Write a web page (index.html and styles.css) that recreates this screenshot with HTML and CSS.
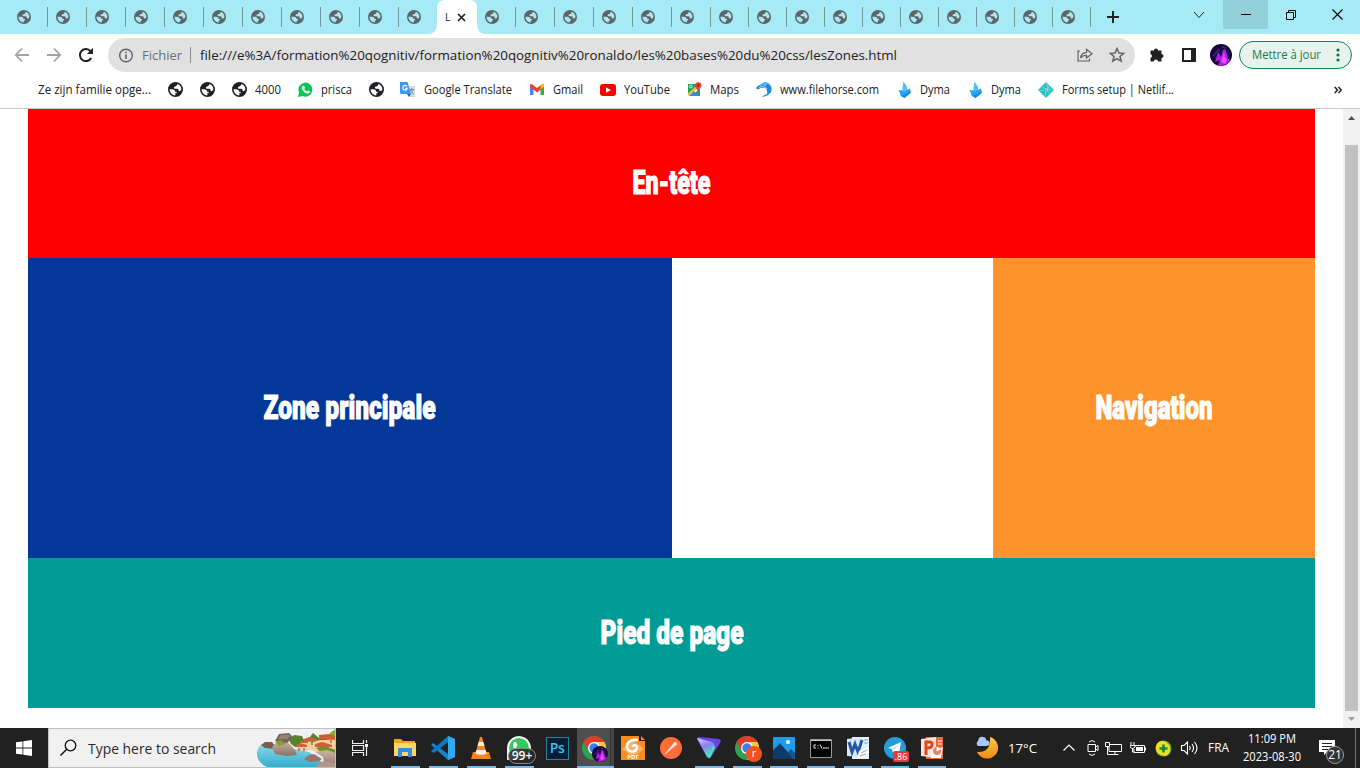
FILE: index.html
```html
<!DOCTYPE html>
<html lang="fr">
<head>
<meta charset="utf-8">
<title>Les zones</title>
<link rel="stylesheet" href="styles.css">
</head>
<body>
<svg class="defs" width="0" height="0">
  <symbol id="globe" viewBox="0 0 14 14"><circle cx="7" cy="7" r="7" fill="currentColor"/><path class="land" d="M1.500 6.700H4.200Q6.700 7 6.700 9H8V10.500H6.800V12.500C3.800 12.300 1.500 9.800 1.500 6.700zM9 1.800C11.300 2.700 12.600 4.800 12.500 7.300L11.300 8.400H9.800V7.100L8.600 6.300H6.300Q5 5.800 5.700 4.500L7.600 3.900z"/></symbol>
  <symbol id="chrome" viewBox="0 0 26 26"><circle cx="13" cy="13" r="12" fill="#2fa14f"/><path d="M2.600 7A12 12 0 0 1 23.400 7H13a6 6 0 0 0-5.200 9z" fill="#e33b2e"/><path d="M23.400 7A12 12 0 0 1 13 25l5.200-9A6 6 0 0 0 18.200 10L13 7z" fill="#fcc934"/><circle cx="13" cy="13" r="6" fill="#fff"/><circle cx="13" cy="13" r="4.700" fill="#3b7ded"/></symbol>
  <symbol id="bird" viewBox="0 0 12 16"><path d="M5 0 8.500 5 8 8 11.500 6.500 12 11 6 16 2 13.500 1.500 11.500 0 8 4 8.500z" fill="#27a5f5"/><path d="M2 13.500 8 12 12 8V11L6 16z" fill="#168be3"/><path d="M5 0 8.500 5 8 8 5 10 4 5z" fill="#55bff8"/></symbol>
  <symbol id="avatar" viewBox="0 0 22 22"><circle cx="11" cy="11" r="11" fill="#18073d"/><path d="M5 18 8 8 11 13 13 6 15 5 17 10 18 15 21 16 17 20 11 22 8 21 10 16z" fill="#b21be8"/><path d="M11 18 14 8 15 13 17 16 15 20z" fill="#ed4bf5"/><path d="M3 12 6 9 9 5M12 3l4 1" stroke="#4a1c98" stroke-width="1.500" fill="none"/></symbol>
</svg>

<div class="tabs">
  <div class="tab"><svg><use href="#globe"/></svg></div><div class="tab"><svg><use href="#globe"/></svg></div><div class="tab"><svg><use href="#globe"/></svg></div><div class="tab"><svg><use href="#globe"/></svg></div><div class="tab"><svg><use href="#globe"/></svg></div><div class="tab"><svg><use href="#globe"/></svg></div><div class="tab"><svg><use href="#globe"/></svg></div><div class="tab"><svg><use href="#globe"/></svg></div><div class="tab"><svg><use href="#globe"/></svg></div><div class="tab"><svg><use href="#globe"/></svg></div><div class="tab last"><svg><use href="#globe"/></svg></div>
  <div class="tab-active"><svg class="tab-title" width="7" height="16"><text x="1" y="12">L</text></svg><svg width="9" height="9" viewBox="0 0 9 9"><path d="M1 1 8 8M8 1 1 8" stroke="#202124" stroke-width="1.700"/></svg></div>
  <div class="tab"><svg><use href="#globe"/></svg></div><div class="tab"><svg><use href="#globe"/></svg></div><div class="tab"><svg><use href="#globe"/></svg></div><div class="tab"><svg><use href="#globe"/></svg></div><div class="tab"><svg><use href="#globe"/></svg></div><div class="tab"><svg><use href="#globe"/></svg></div>
  <div class="tab slim"><svg><use href="#globe"/></svg></div><div class="tab slim"><svg><use href="#globe"/></svg></div><div class="tab slim"><svg><use href="#globe"/></svg></div><div class="tab slim"><svg><use href="#globe"/></svg></div><div class="tab slim"><svg><use href="#globe"/></svg></div><div class="tab slim"><svg><use href="#globe"/></svg></div><div class="tab slim"><svg><use href="#globe"/></svg></div><div class="tab slim"><svg><use href="#globe"/></svg></div><div class="tab slim"><svg><use href="#globe"/></svg></div><div class="tab slim"><svg><use href="#globe"/></svg></div>
  <div class="new-tab"><svg width="12" height="12" viewBox="0 0 12 12"><path d="M6 0V12M0 6H12" stroke="#202124" stroke-width="2"/></svg></div>
  <div class="window-controls">
    <div class="win"><svg width="12" height="8" viewBox="0 0 12 8"><path d="M1 1 6 6.500 11 1" fill="none" stroke="#222"/></svg></div>
    <div class="win hover"><svg width="10" height="1"><path d="M0 .5H10" stroke="#000"/></svg></div>
    <div class="win"><svg width="10" height="10" viewBox="0 0 10 10"><path d="M.5 2.500H7.500V9.500H.5zM2.500 2.500V.5H9.500V7.500H7.500" fill="none" stroke="#000"/></svg></div>
    <div class="win"><svg width="11" height="11" viewBox="0 0 11 11"><path d="M.5.5 10.500 10.500M10.500.5.5 10.500" stroke="#000" stroke-width="1.100"/></svg></div>
  </div>
</div>

<div class="toolbar">
  <div class="nav-buttons">
    <svg width="16" height="16" viewBox="0 0 16 16"><path d="M15 8H2M8 1.500 1.800 8 8 14.500" fill="none" stroke="#a3a3a3" stroke-width="1.800"/></svg>
    <svg width="16" height="16" viewBox="0 0 16 16"><path d="M1 8H14M8 1.500 14.200 8 8 14.500" fill="none" stroke="#a3a3a3" stroke-width="1.800"/></svg>
    <svg width="16" height="16" viewBox="0 0 16 16"><path d="M13.200 11A6 6 0 1 1 12.500 4.200" fill="none" stroke="#202124" stroke-width="2"/><path d="M15 .8V7H8.800z" fill="#202124"/></svg>
  </div>
  <div class="omnibox">
    <svg class="info" width="15" height="15" viewBox="0 0 15 15"><circle cx="7" cy="7.500" r="6.300" fill="none" stroke="#5f6368" stroke-width="1.400"/><path d="M7 6.500V11M7 3.700V5.300" stroke="#5f6368" stroke-width="1.600"/></svg>
    <svg class="label scheme" width="41" height="20"><text y="15" textLength="40" lengthAdjust="spacingAndGlyphs">Fichier</text></svg>
    <i class="divider"></i>
    <svg class="label url" width="698" height="20"><text y="15" textLength="697" lengthAdjust="spacingAndGlyphs">file:///e%3A/formation%20qognitiv/formation%20qognitiv%20ronaldo/les%20bases%20du%20css/lesZones.html</text></svg>
    <svg class="share" width="16" height="14" viewBox="0 0 16 14"><path d="M3 3H1V13H12.500V10.500M3.500 10C4 6.500 6 4.500 9.500 4.300V1.300L15 5.700 9.500 10V7.300C7 7.200 5 8 3.500 10z" fill="none" stroke="#606468" stroke-width="1.200"/></svg>
    <svg class="star" width="16" height="16" viewBox="0 0 16 16"><path d="M8 1.500 9.900 6 14.700 6.300 11 9.500 12.200 14.200 8 11.600 3.800 14.200 5 9.500 1.300 6.300 6.100 6z" fill="none" stroke="#5f6368" stroke-width="1.500"/></svg>
  </div>
  <svg class="puzzle" width="16" height="16" viewBox="0 0 16 16"><path d="M1.500 3.500H5A2 2 0 1 1 9 3.500H12.500V7A2 2 0 1 1 12.500 11V14.500H9A2.100 2.100 0 0 0 4.800 14.500H1.500V11A2.100 2.100 0 0 0 1.500 7z" fill="#202124"/></svg>
  <svg class="panel" width="14" height="14" viewBox="0 0 14 14"><path d="M0 0H14V14H0zM2 2V12H9V2z" fill="#202124" fill-rule="evenodd"/></svg>
  <svg class="profile" width="22" height="22"><use href="#avatar"/></svg>
  <div class="update"><svg class="label" width="70" height="18"><text y="13" textLength="69" lengthAdjust="spacingAndGlyphs">Mettre à jour</text></svg><svg width="4" height="14" viewBox="0 0 4 14"><g fill="#087443"><circle cx="2" cy="2" r="1.600"/><circle cx="2" cy="7" r="1.600"/><circle cx="2" cy="12" r="1.600"/></g></svg></div>
</div>

<div class="bookmarks">
  <div class="mark"><svg class="label" width="114" height="18"><text y="13" textLength="113" lengthAdjust="spacingAndGlyphs">Ze zijn familie opge...</text></svg></div>
  <div class="mark"><svg class="world"><use href="#globe"/></svg></div>
  <div class="mark"><svg class="world"><use href="#globe"/></svg></div>
  <div class="mark"><svg class="world"><use href="#globe"/></svg><svg class="label" width="27" height="18"><text y="13" textLength="26" lengthAdjust="spacingAndGlyphs">4000</text></svg></div>
  <div class="mark"><svg width="15" height="15" viewBox="0 0 15 15"><path d="M0 15 1 10.500A7 7 0 1 1 4.500 14z" fill="#0bc657"/><path d="M4.500 4 6 3.700 7 6 6.200 7C7 8.400 7.700 9 9 9.500L10 8.600 12 9.600C12 11.500 10 12 8.500 11.300 6 10.500 4 8 3.700 6z" fill="#fff"/></svg><svg class="label" width="32" height="18"><text y="13" textLength="31" lengthAdjust="spacingAndGlyphs">prisca</text></svg></div>
  <div class="mark"><svg class="world"><use href="#globe"/></svg></div>
  <div class="mark"><svg width="16" height="16" viewBox="0 0 16 16"><path d="M7 4H15V15H9z" fill="#d8dbe0"/><path d="M9.500 7.500H14M11.700 6V7.500M13 8C12.500 10 11 11.500 9.500 12M10.500 8C11 10 12.500 11.300 13.800 12" stroke="#78909c" fill="none"/><path d="M0 0H7.500L11 12H1Q0 12 0 11z" fill="#3e97f1"/><path d="M7 12H11L9 15z" fill="#1967d2"/><path d="M7 4.500A2.300 2.300 0 1 0 7.300 6.300H5" fill="none" stroke="#fff" stroke-width="1.200"/></svg><svg class="label" width="90" height="18"><text y="13" textLength="88" lengthAdjust="spacingAndGlyphs">Google Translate</text></svg></div>
  <div class="mark"><svg width="15" height="15" viewBox="0 0 15 15"><path d="M0 4V13H3.500V6z" fill="#4285f4"/><path d="M10.500 6V13H14V4z" fill="#34a853"/><path d="M0 4V3Q.5 1.500 2.500 2.500L7 6 11.500 2.500Q13.500 1.500 14 3V5L7 10.500 0 5z" fill="#ea4335"/><path d="M10.500 3.300 11.500 2.500Q13.500 1.500 14 3V5L10.500 7.500z" fill="#fbbc04"/></svg><svg class="label" width="32" height="18"><text y="13" textLength="30" lengthAdjust="spacingAndGlyphs">Gmail</text></svg></div>
  <div class="mark"><svg width="16" height="12" viewBox="0 0 16 12"><rect width="16" height="12" rx="3" fill="#f00"/><path d="M6 3.500 11 6 6 8.700z" fill="#fff"/></svg><svg class="label" width="47" height="18"><text y="13" textLength="46" lengthAdjust="spacingAndGlyphs">YouTube</text></svg></div>
  <div class="mark"><svg width="15" height="15" viewBox="0 0 15 15"><path d="M1 2H13V14H1z" fill="#1fa463"/><path d="M2 14H1V12.500L11 3 13 4V6L5 14z" fill="#fff"/><path d="M1 13V11.500L9.500 3.500 11.500 5 2.500 14z" fill="#fbc02d"/><path d="M7 9 12.500 14H2z" fill="#4285f4"/><path d="M11 10C10.500 7 8 6 8 3.500A3.200 3.200 0 0 1 14.500 3.500C14.500 6 11.500 7 11 10z" fill="#ea4335"/><circle cx="11.200" cy="3.300" r="1.100" fill="#8c1d18"/><circle cx="3.800" cy="4.500" r="1.400" fill="none" stroke="#fff" stroke-width=".8"/></svg><svg class="label" width="31" height="18"><text y="13" textLength="29" lengthAdjust="spacingAndGlyphs">Maps</text></svg></div>
  <div class="mark"><svg width="16" height="15" viewBox="0 0 16 15"><path d="M0 6Q2 3 4 3 8-1 12 1 17 5 15 10 13 14 6 15 8 13 11 12 12 8 9 6 5 5 3 7 1 8 0 6z" fill="#168de2"/><path d="M4 3Q8-1 12 1L10 4 7 3 4 4z" fill="#57b8f3"/><path d="M3 5.500Q8 3 11 7" fill="none" stroke="#fff" stroke-width=".7"/></svg><svg class="label" width="100" height="18"><text y="13" textLength="99" lengthAdjust="spacingAndGlyphs">www.filehorse.com</text></svg></div>
  <div class="mark"><svg class="bird" width="13" height="16"><use href="#bird"/></svg><svg class="label" width="32" height="18"><text y="13" textLength="30" lengthAdjust="spacingAndGlyphs">Dyma</text></svg></div>
  <div class="mark"><svg class="bird" width="13" height="16"><use href="#bird"/></svg><svg class="label" width="32" height="18"><text y="13" textLength="30" lengthAdjust="spacingAndGlyphs">Dyma</text></svg></div>
  <div class="mark"><svg width="16" height="16" viewBox="0 0 16 16"><path d="M8 0 16 8 8 16 0 8z" fill="#25bfc1"/><path d="M4 5 8 7 14 8M8 1 10 5 8 8 7 15M1 9 6 8M11 4 9 9 12 11" stroke="#a5e6e6" stroke-width=".7" fill="none"/></svg><svg class="label" width="113" height="18"><text y="13" textLength="112" lengthAdjust="spacingAndGlyphs">Forms setup | Netlif...</text></svg></div>
  <div class="mark"><svg width="8" height="8" viewBox="0 0 8 8"><path d="M.7 1 3.500 4 .7 7M4.500 1 7.300 4 4.500 7" fill="none" stroke="#202124" stroke-width="1.500"/></svg></div>
</div>

<div class="viewport">
  <div class="page">
    <header class="zone head"><svg class="title" width="79" height="44"><text x="0.500" y="32" textLength="78" lengthAdjust="spacingAndGlyphs">En-tête</text></svg></header>
    <main class="zone principal"><svg class="title" width="173" height="44"><text x="0.500" y="33" textLength="172" lengthAdjust="spacingAndGlyphs">Zone principale</text></svg></main>
    <nav class="zone navigation"><svg class="title" width="118" height="44"><text x="0.500" y="33" textLength="117" lengthAdjust="spacingAndGlyphs">Navigation</text></svg></nav>
    <footer class="zone foot"><svg class="title" width="144" height="44"><text x="0.500" y="32.500" textLength="143" lengthAdjust="spacingAndGlyphs">Pied de page</text></svg></footer>
  </div>
  <div class="scrollbar">
    <svg width="17" height="17" viewBox="0 0 17 17"><path d="M5 11H12L8.500 7z" fill="#505050"/></svg>
    <div class="thumb"></div>
    <svg width="17" height="17" viewBox="0 0 17 17"><path d="M5 6H12L8.500 10z" fill="#a0a0a0"/></svg>
  </div>
</div>

<div class="taskbar">
  <div class="start"><svg width="16" height="16" viewBox="0 0 16 16"><path d="M0 2.300 6.500 1.400V7.500H0zM7.300 1.300 16 0V7.500H7.300zM0 8.400H6.500V14.600L0 13.700zM7.300 8.400H16V16L7.300 14.700z" fill="#fff"/></svg></div>
  <div class="search">
    <svg width="18" height="18" viewBox="0 0 18 18"><circle cx="11.500" cy="6.500" r="5.300" fill="none" stroke="#111" stroke-width="1.300"/><path d="M7.700 10.300 1.500 16.500" stroke="#111" stroke-width="1.500"/></svg>
    <svg class="label" width="129" height="22"><text y="17" textLength="128" lengthAdjust="spacingAndGlyphs">Type here to search</text></svg>
    <svg class="coast" width="79" height="36" viewBox="0 0 79 36">
      <defs><linearGradient id="sea" x2="0" y2="1"><stop stop-color="#8adbe9"/><stop offset="1" stop-color="#2fa9c9"/></linearGradient><linearGradient id="rock" x2="0" y2="1"><stop stop-color="#cdb5a4"/><stop offset="1" stop-color="#8a7068"/></linearGradient></defs>
      <path d="M0 19Q1 9 14 11L52 19 66 30 64 36H15Q-1 31 0 19z" fill="url(#sea)"/>
      <path d="M34 11 32 7 37 2 45 3 48 9 53 4 56 0 62 5 68 5 79-3V12L60 16 38 14z" fill="#55822a"/>
      <path d="M69 4Q74-2 79-4V7L70 8z" fill="#86a92c"/>
      <path d="M4 12 8 9 15 9 18 13 17 16 8 15z" fill="#7b5c52"/>
      <path d="M15 14 21 8 31 9 38 17 40 22 30 23 18 21z" fill="url(#rock)"/>
      <path d="M18 8 22 1 32 0 36 4 30 10 22 9z" fill="#716657"/><path d="M23 3H33M22 5H31" stroke="#b09f87" stroke-width="1.200"/>
      <path d="M18 9 24 7 29 11 22 13z" fill="#8c9a30"/>
      <path d="M40 12 48 8 56 9 63 7 79 7V22H66L54 17 41 18z" fill="#f0d0a2"/>
      <path d="M39 12 43 10 50 12V14H39zM47 6 52 4 60 6V8H47zM58 11 65 9 75 12V14H58zM62 2 72 1 79 4V6H62zM44 8H51V10H44z" fill="#d45c36"/>
      <path d="M42 15V18M47 15V18M55 9V12M62 14V17M68 14V17M74 7V10" stroke="#a4713f" stroke-width="1.500"/>
      <path d="M59 15 68 13 79 17V20H65z" fill="#778d2d"/>
      <path d="M47 26 52 22 57 21 65 26 62 28 53 29z" fill="#98756a"/>
      <path d="M58 19 70 17 79 20V36H58L67 31 66 24z" fill="url(#rock)"/>
      <path d="M57 36 63 29 69 28 79 31V36z" fill="#b2968a"/>
    </svg>
  </div>
  <div class="task-view"><svg width="17" height="16" viewBox="0 0 17 16"><path d="M.5 0V3.500H11.500V0M.5 16V12.500H11.500V16M.5 5.500H11.500V10.500H.5zM14.500 0V3M14.500 7V16" fill="none" stroke="#eee" stroke-width="1.200"/><path d="M13 4H16V7H13z" fill="#fff"/></svg></div>
  <div class="apps">
    <div class="app open"><svg width="22" height="20" viewBox="0 0 22 20"><path d="M0 1H7L9 3H21V18H0z" fill="#e9a51c"/><path d="M0 5H22V18H0z" fill="#ffd763"/><path d="M4 19V11Q4 10 5 10H17Q18 10 18 11V19H14V14H8V19z" fill="#378ce0"/></svg></div>
    <div class="app open"><svg width="24" height="24" viewBox="0 0 24 24"><path d="M17 0 24 3V21L17 24 0 9 2 7 17 18z" fill="#1683ce"/><path d="M17 0V6L3 17 0 15z" fill="#087bc0"/><path d="M17 0 24 3V21L17 24z" fill="#32a9ed"/></svg></div>
    <div class="app open"><svg width="20" height="24" viewBox="0 0 20 24"><path d="M2 16H18L20 23H0z" fill="#f38212"/><path d="M9 1H11L16 19Q10 22 4 19z" fill="#f58b1d"/><path d="M7.700 6H12.300L13.500 10H6.500zM5.300 14H14.700L15.700 17.500Q10 20 4.300 17.500z" fill="#eee"/></svg></div>
    <div class="app open"><svg width="24" height="24" viewBox="0 0 24 24"><path d="M0 24V12A12 12 0 1 1 7 23z" fill="#f6f6f6"/><circle cx="12" cy="12" r="10" fill="#35c95b"/><path d="M7 6 9 6 10.500 9 9 11 13 15 16 14 18 16 14 18Q6 16 6 8z" fill="#fff"/></svg><span class="count">99+</span></div>
    <div class="app"><span class="photoshop">Ps</span></div>
    <div class="app open current"><svg width="26" height="26"><use href="#chrome"/></svg><svg class="badge" width="16" height="16" viewBox="0 0 22 22"><use href="#avatar"/></svg></div>
    <div class="app"><svg width="24" height="24" viewBox="0 0 24 24"><path d="M0 0H18V5H24V24H0zM20 0 24 4H20z" fill="#f68b1f"/><path d="M1 13 12 4 23 13 12 21z" fill="#f9b169"/><path d="M17 4Q7 3 6 10 6 16 12 15.500 16 15 16 11 15 8 11 10.500" fill="none" stroke="#fff" stroke-width="2.500"/><text x="12" y="23" class="pdf" text-anchor="middle">PDF</text></svg></div>
    <div class="app"><svg width="22" height="22" viewBox="0 0 22 22"><circle cx="11" cy="11" r="11" fill="#ff6c37"/><path d="M5 17 10 11 15 5 17 7 11 12zM6 16 16 6" fill="#fff" stroke="#ffd9cb"/></svg></div>
    <div class="app open"><svg width="24" height="22" viewBox="0 0 24 22"><defs><linearGradient id="vpn" x2=".3" y2="1"><stop stop-color="#d8ccff"/><stop offset=".5" stop-color="#8d80f5"/><stop offset="1" stop-color="#4ee4b6"/></linearGradient></defs><path d="M0 2Q0 0 3 0L22 2Q25 3 23 6L14 20Q12 23 10 20z" fill="#6845e7"/><path d="M0 1 15 5Q18 6 16 9L10 20z" fill="url(#vpn)"/><path d="M10 20 17 7 18 11 13 21z" fill="#4ee4b6"/></svg></div>
    <div class="app open"><svg width="26" height="26"><use href="#chrome"/></svg><span class="badge red">r</span></div>
    <div class="app slim open"><svg width="22" height="22" viewBox="0 0 22 22"><path d="M0 0H22V22H0z" fill="#229be9"/><path d="M0 13 7 6 15 15 18 12 22 16V22H0z" fill="#15568f"/><path d="M0 14 7 7 20 22H0z" fill="#123a69"/><circle cx="15" cy="5" r="2" fill="#fff"/></svg></div>
    <div class="app slim open"><svg width="22" height="19" viewBox="0 0 22 19"><path d="M.5.5H21.500V18.500H.5z" fill="#050505" stroke="#999"/><path d="M1 1.500H21" stroke="#ccc"/><path d="M6 6H4V9H6M8 6V7M8 8.500V9.500M10 5.500 12 9.500M13 9H19" stroke="#ddd" fill="none"/></svg></div>
    <div class="app slim open"><svg width="22" height="22" viewBox="0 0 22 22"><path d="M5 0H22V22H5z" fill="#e9f1fb"/><path d="M0 2 15 0V20L0 19z" fill="#dbe7f6"/><path d="M2 5 5 15 8 7 11 15 15 3" fill="none" stroke="#2158a8" stroke-width="3"/><path d="M12 14 21 10 20 21H10z" fill="#fff"/><path d="M14 16 20 13M13 19 19 17M17 3H21M17 6H21" stroke="#80a7d7"/></svg></div>
    <div class="app slim open"><svg width="22" height="22" viewBox="0 0 22 22"><circle cx="11" cy="11" r="11" fill="#249dd8"/><path d="M4 11 17 5 15 17 11 14 9 16 8 12z" fill="#fff"/><path d="M8 12 15 7 10 13" fill="#b8ddf0"/></svg><span class="badge mail">.86</span></div>
    <div class="app slim open"><svg width="22" height="22" viewBox="0 0 22 22"><path d="M5 0H22V22H5z" fill="#e9693d"/><path d="M0 2 15 0V21L0 19z" fill="#f9e2d8"/><path d="M5 18V5H8Q12 5 11 8 11 11 5 11" fill="none" stroke="#d8481b" stroke-width="3"/><path d="M11 14 22 10 20 21H10z" fill="#fff"/><circle cx="16" cy="14" r="4" fill="#ed835f"/><path d="M16 14V10L19 12zM17 4H21M17 7H21" stroke="#fff" fill="#fff"/></svg></div>
  </div>
  <div class="weather"><svg width="24" height="23" viewBox="0 0 24 23"><defs><linearGradient id="moon" x2="0" y2="1"><stop stop-color="#ffc83f"/><stop offset="1" stop-color="#f28a18"/></linearGradient></defs><path d="M15 1A11 11 0 1 1 2 16Q16 17 15 1z" fill="url(#moon)"/><path d="M3 10A3 3 0 0 1 3 5Q4 0 8 1 11 1 11 4 16 5 14 9 13 10 11 10z" fill="#a9c8f5"/></svg><svg class="label" width="30" height="20"><text y="16" textLength="29" lengthAdjust="spacingAndGlyphs">17°C</text></svg></div>
  <div class="tray">
    <svg width="12" height="8" viewBox="0 0 12 8"><path d="M.5 6.500 6 1 11.500 6.500" fill="none" stroke="#fff" stroke-width="1.200"/></svg>
    <svg class="meet" width="12" height="16" viewBox="0 0 12 16"><path d="M1 4.500H8.500V11.500H1zM8.500 7 11 5.500V10.500L8.500 9M2 2Q5-1 8 2M2 14Q5 17 8 14" fill="none" stroke="#fff"/></svg>
    <svg width="17" height="15" viewBox="0 0 17 15"><path d="M5 3.500H16.500V10.500H4V6M10 10.500V13.500M6.500 13.500H13.500M.5 1.500H4.500V5.500H.5zM2.500 5.500V13.500H7" fill="none" stroke="#fff"/></svg>
    <svg width="16" height="14" viewBox="0 0 16 14"><path d="M5 4.500H14.500V11.500H4V8M1 1V4M4 1V4M0 4.500H5V6L3 7.500H2L0 6zM2.500 7V11H4M15.500 6.500V9.500" fill="none" stroke="#fff"/><path d="M6 6H13V10H6z" fill="#fff"/></svg>
    <svg width="17" height="17" viewBox="0 0 17 17"><circle cx="8.500" cy="8.500" r="8" fill="#64b532"/><path d="M1 6Q4-1 11 2L14 5Q17 12 11 16L6 15Q0 12 1 6z" fill="#f7dc22"/><path d="M8.500 4.500V12.500M4.500 8.500H12.500" stroke="#178c33" stroke-width="2.600"/></svg>
    <svg width="17" height="14" viewBox="0 0 17 14"><path d="M.5 4.500H3L6.500 1V13L3 9.500H.5zM8.500 5Q10 7 8.500 9M11 3Q14 7 11 11M13.500 1Q18.500 7 13.500 13" fill="none" stroke="#fff" stroke-width="1.100"/></svg>
  </div>
  <svg class="label lang" width="22" height="18"><text y="13" textLength="21" lengthAdjust="spacingAndGlyphs">FRA</text></svg>
  <div class="clock"><svg class="label" width="48" height="18"><text y="14" textLength="48" lengthAdjust="spacingAndGlyphs">11:09 PM</text></svg><svg class="label" width="58" height="18"><text y="14" textLength="58" lengthAdjust="spacingAndGlyphs">2023-08-30</text></svg></div>
  <div class="notice"><svg width="16" height="15" viewBox="0 0 16 15"><path d="M0 0H16V12H8L5 15V12H0z" fill="#fff"/><path d="M3 3.500H13M3 6.500H13M3 9.500H9" stroke="#222"/></svg><span>21</span></div>
</div>
</body>
</html>
```
FILE: styles.css
```css
* { box-sizing: border-box; }
body { margin: 0; width: 1360px; height: 768px; overflow: hidden; display: flex; flex-direction: column; background: #fff; font-family: "Open Sans", "Noto Sans", sans-serif; font-size: 12px; color: #202124; }
svg { display: block; flex: none; }
.defs { position: absolute; }
.label { fill: #202124; font-size: 12px; overflow: visible; }
.land { fill: var(--land); }

.tabs { flex: none; height: 34px; display: flex; background: #a6eaf5; padding-left: 9px; --land: #a6eaf5; }
.tab { flex: none; width: 39px; height: 20px; margin-top: 7px; padding: 3px 0 0 8px; border-right: 1px solid #75989f; color: #5f6368; }
.tab.slim { width: 38px; }
.tab.last { width: 38px; border: 0; margin-right: -10px; }
.tab svg { width: 14px; height: 14px; }
.tab-active { flex: none; display: flex; align-items: center; width: 60px; height: 34px; margin-right: -10px; padding: 0 0 0 17px; gap: 6px; background: #fff;
  clip-path: path("M0 34Q10 34 10 24V8Q10 0 18 0H42Q50 0 50 8V24Q50 34 60 34z"); }
.tab-title { font-size: 10.5px; fill: #202124; overflow: visible; }
.new-tab { width: 44px; padding: 11px 0 0 16px; }
.window-controls { display: flex; margin-left: auto; }
.win { width: 46px; height: 29px; display: flex; align-items: center; justify-content: center; }
.win.hover { width: 45px; margin: 0 0 0 1px; background: #94d0da; }

.toolbar { flex: none; height: 42px; display: flex; align-items: center; padding-left: 14px; }
.nav-buttons { width: 94px; display: flex; gap: 16px; }
.omnibox { width: 1027px; height: 34px; border-radius: 17px; background: #e1e1e1; display: flex; align-items: center; padding-left: 11px; }
.omnibox .label { font-size: 13.5px; }
.scheme { margin-left: 8px; }
.omnibox .scheme { fill: #6a6e72; }
.divider { width: 1px; height: 16px; margin: 0 9px 0 7px; background: #8a8d90; }
.share { margin-left: 179px; }
.star { margin-left: 16px; }
.puzzle { margin-left: 14px; }
.panel { margin-left: 17px; }
.profile { margin-left: 14px; }
.update { width: 113px; height: 28px; margin-left: 7px; border: 1px solid #188152; border-radius: 14px; background: #e7f3ec; display: flex; align-items: center; padding-left: 12px; gap: 14px; }
.update .label { fill: #187b4d; }

.bookmarks { flex: none; height: 33px; border-bottom: 1px solid #c9c9c9; display: grid; grid-template-columns: 130px 32px 32px 66px 71px 31px 130px 70px 87px 69px 141px 71px 70px 296px 20px; align-items: center; padding: 0 0 5px 38px; --land: #fff; }
.mark { display: flex; align-items: center; gap: 8px; }
.bird { margin: 0 1px; }
.world { width: 15px; height: 15px; }

.viewport { flex: none; height: 619px; display: flex; justify-content: space-between; padding-left: 28px; }
.page { width: 1287px; height: 599px; display: grid; grid-template: 149px 300px 150px / 644px 321px 322px; }
.zone { display: flex; align-items: center; justify-content: center; }
.head { grid-column: 1 / 4; background: #f00; }
.principal { background: #033798; padding-right: 1px; }
.navigation { grid-column: 3; background: #ff932b; }
.foot { grid-column: 1 / 4; background: #009b94; }
.title { fill: #fff; stroke: #fff; stroke-width: 1.1px; font: 900 33px Roboto, sans-serif; overflow: visible; }
.scrollbar { width: 17px; background: #f1f1f1; display: flex; flex-direction: column; justify-content: space-between; }
.thumb { width: 13px; height: 566px; margin: 19px 0 0 2px; background: #c1c1c1; }

.taskbar { flex: none; height: 40px; display: flex; background: #222122; color: #fff; }
.taskbar .label { fill: #fff; }
.start { width: 48px; display: flex; align-items: center; justify-content: center; }
.search { width: 288px; border: 1px solid #c0c0c0; background: #f1f1f1; display: flex; align-items: center; padding-left: 10px; overflow: hidden; }
.taskbar .search .label { fill: #2b2b2b; font-size: 14.5px; margin-left: 11px; }
.coast { margin: 5px 0 0 40px; overflow: visible; }
.task-view { width: 50px; display: flex; align-items: center; justify-content: center; padding-right: 2px; }
.apps { width: 565px; display: flex; }
.app { position: relative; width: 38px; display: flex; align-items: center; justify-content: center; }
.app.slim { width: 37px; padding-right: 2px; }
.open { background: linear-gradient(#76b9ed, #76b9ed) 5px 38px / 29px 2px no-repeat; }
.slim.open { background-position: 4px 38px; background-size: 28px 2px; }
.current { background: linear-gradient(#76b9ed, #76b9ed) 0 38px / 38px 2px no-repeat, linear-gradient(90deg, #4e4e4e 33px, #303030 33px, #303030 34px, #454545 34px); width: 37px; margin-left: 1px; padding-right: 4px; }
.count { position: absolute; left: 8px; top: 20px; width: 28px; height: 16px; border: 1px solid #888; border-radius: 8px; background: #292929e0; font: 600 12px/14px "Open Sans", sans-serif; text-align: center; }
.photoshop { width: 23px; height: 23px; border: 1px solid #2182a0; background: #061d32; color: #2fc4ef; font: 600 14px/20px "Open Sans", sans-serif; text-align: center; letter-spacing: -.4px; }
.badge { position: absolute; left: 15px; top: 18px; }
.red { left: 18px; width: 16px; height: 16px; border-radius: 8px; background: #f4511e; font-size: 11px; line-height: 14px; text-align: center; }
.mail { left: 16px; top: 23px; width: 16px; height: 11px; border-radius: 2px; background: #e53945; font-size: 9px; line-height: 11px; text-align: center; }
.pdf { font: 700 6px "Open Sans", sans-serif; fill: #fff; }
.weather { width: 111px; display: flex; align-items: center; padding: 0 0 2px 24px; gap: 9px; }
.weather .label { font-size: 13.5px; }
.tray { width: 146px; display: flex; align-items: center; justify-content: space-between; padding: 0 10px 0 1px; }
.meet { margin: 0 -3px 0 3px; }
.lang { align-self: center; }
.clock { width: 84px; display: flex; flex-direction: column; align-items: center; padding-top: 1px; }
.notice { position: relative; width: 42px; border-right: 1px solid #777; padding: 12px 0 0 5px; }
.notice span { position: absolute; left: 12px; top: 18px; width: 18px; height: 18px; border: 1px solid #999; border-radius: 50%; background: #333; font-size: 12px; line-height: 15px; text-align: center; }
```
